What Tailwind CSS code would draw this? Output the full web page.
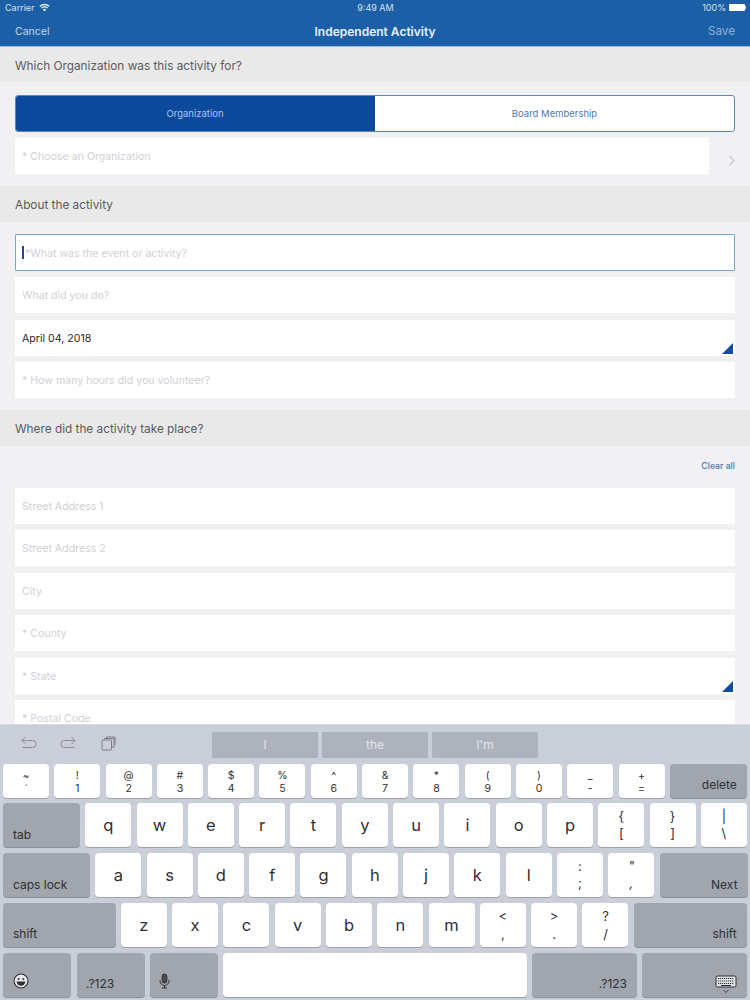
<!DOCTYPE html>
<html><head><meta charset="utf-8">
<script src="https://cdn.jsdelivr.net/npm/@tailwindcss/browser@4"></script>
</head>
<body class="m-0">
<div class="w-[750px] h-[1000px] overflow-hidden flex flex-col font-['Inter','Liberation_Sans',sans-serif] bg-[#f1f1f3]">
  <!-- header -->
  <div class="h-[47px] shrink-0 bg-[#1c5fa6] border-b border-[#a9c0db] text-white">
    <div class="h-[15px] flex items-center justify-between pl-[5px] pr-[4px] text-[9px] text-[#d5e2f0]">
      <div class="flex items-center gap-[4px] w-[150px]"><span>Carrier</span>
        <svg width="11" height="9" viewBox="0 0 22 16" fill="#e6eef7"><path d="M11 16 L7.5 12 Q11 9.4 14.5 12 Z"/><path d="M5.8 10 L4 8 Q11 2.6 18 8 L16.2 10 Q11 6.2 5.8 10 Z"/><path d="M2.6 6.6 L.6 4.6 Q11 -3.4 21.4 4.6 L19.4 6.6 Q11 .6 2.6 6.6 Z"/></svg>
      </div>
      <span>9:49 AM</span>
      <div class="flex items-center justify-end gap-[3px] w-[150px]"><span>100%</span>
        <div class="flex items-center"><div class="w-[16px] h-[7px] bg-white rounded-[1px]"></div><div class="w-[1px] h-[3px] bg-[#c5d6e8]"></div></div>
      </div>
    </div>
    <div class="h-[31px] flex items-center justify-between px-[15px] pt-[2px]">
      <span class="text-[10.5px] text-[#c4d6ea] w-[100px]">Cancel</span>
      <span class="text-[12px] font-semibold text-[#e8f0f8]">Independent Activity</span>
      <span class="text-[11.7px] text-[#8fb1d6] w-[100px] text-right">Save</span>
    </div>
  </div>

  <!-- form -->
  <div class="h-[677px] overflow-hidden shrink-0">
    <div class="h-[35px] bg-[#e9e9ea] flex items-center px-[15px] pt-[4px] text-[11.8px] text-[#5a5a5c]">Which Organization was this activity for?</div>

    <div class="mt-[13px] mx-[15px] h-[37px] w-[720px] flex rounded-[3px] overflow-hidden border border-[#5d86b8] bg-white text-[9.5px]">
      <div class="w-[360px] -ml-px -my-px pt-[2px] bg-[#0d4a9e] text-[#a9c8ea] flex items-center justify-center">Organization</div>
      <div class="flex-1 pt-[2px] text-[#4f77ad] flex items-center justify-center">Board Membership</div>
    </div>
    <div class="mt-[6px] ml-[15px] flex items-start">
      <div class="w-[694px] h-[36px] bg-white rounded-[1px] flex items-center px-[7px] pt-[2px] text-[10.6px] text-[#d0d0d4]">* Choose an Organization</div>
      <svg class="ml-[19px] mt-[17px]" width="8" height="11" viewBox="0 0 8 11" fill="none" stroke="#c6c6ca" stroke-width="1.1"><path d="M1.5 1 L6.2 5.5 L1.5 10"/></svg>
    </div>

    <div class="mt-[12px] h-[36px] bg-[#e9e9ea] flex items-center px-[15px] pt-[4px] text-[11.8px] text-[#5a5a5c]">About the activity</div>

    <div class="mt-[12px] mx-[15px] flex flex-col gap-[6.5px]">
      <div class="h-[36.5px] bg-white border border-[#6fa8cf] rounded-[1px] flex items-center pl-[6px] text-[10.6px] text-[#d0d0d4]">
        <span class="w-[2px] h-[13px] bg-[#1f4a86] mr-[1px] mt-[1px]"></span><span class="pt-[3px]">*What was the event or activity?</span>
      </div>
      <div class="h-[36px] bg-white flex items-center px-[7px] pt-[2px] text-[10.6px] text-[#d0d0d4]">What did you do?</div>
      <div class="relative h-[36px] bg-white flex items-center px-[7px] pt-[2px] text-[10.6px] text-[#2a2a2c]">April 04, 2018
        <svg class="absolute right-[2px] bottom-[2px]" width="11" height="11" viewBox="0 0 10 10"><path d="M10 0 V10 H0 Z" fill="#114c9e"/></svg>
      </div>
      <div class="h-[35.5px] bg-white flex items-center px-[7px] pt-[2px] text-[10.6px] text-[#d0d0d4]">* How many hours did you volunteer?</div>
    </div>

    <div class="mt-[12.5px] h-[36px] bg-[#e9e9ea] flex items-center px-[15px] pt-[3px] text-[11.8px] text-[#5a5a5c]">Where did the activity take place?</div>

    <div class="h-[42px] flex items-center justify-end pr-[15px] text-[8.7px] font-medium text-[#4f77ad]">Clear all</div>

    <div class="mx-[15px] flex flex-col gap-[6.4px]">
      <div class="h-[36px] bg-white flex items-center px-[7px] pt-[2px] text-[10.6px] text-[#d0d0d4]">Street Address 1</div>
      <div class="h-[36px] bg-white flex items-center px-[7px] pt-[2px] text-[10.6px] text-[#d0d0d4]">Street Address 2</div>
      <div class="h-[36px] bg-white flex items-center px-[7px] pt-[2px] text-[10.6px] text-[#d0d0d4]">City</div>
      <div class="h-[36px] bg-white flex items-center px-[7px] pt-[2px] text-[10.6px] text-[#d0d0d4]">* County</div>
      <div class="relative h-[36px] bg-white flex items-center px-[7px] pt-[2px] text-[10.6px] text-[#d0d0d4]">* State
        <svg class="absolute right-[2px] bottom-[2px]" width="11" height="11" viewBox="0 0 10 10"><path d="M10 0 V10 H0 Z" fill="#114c9e"/></svg>
      </div>
      <div class="h-[36px] bg-white flex items-center px-[7px] pt-[2px] text-[10.6px] text-[#d0d0d4]">* Postal Code</div>
    </div>
  </div>

  <!-- keyboard -->
  <div class="flex-1 bg-[#c9ced8] border-t border-[#d6d9df] pl-[3px] text-[#2f3033]">
    <!-- toolbar -->
    <div class="h-[39px] flex items-start pt-[6px] relative">
      <svg class="ml-[18px] mt-[5px]" width="16" height="16" viewBox="0 0 16 16" fill="none" stroke="#8a8d94" stroke-width="1"><path d="M1 4.5 H11.5 A3.5 3.5 0 0 1 11.5 11.5 H1.5"/><path d="M4.5 1 L1 4.5 L4.5 8"/></svg>
      <svg class="ml-[23px] mt-[5px]" width="16" height="16" viewBox="0 0 16 16" fill="none" stroke="#8a8d94" stroke-width="1"><path d="M15 4.5 H4.5 A3.5 3.5 0 0 0 4.5 11.5 H14.5"/><path d="M11.5 1 L15 4.5 L11.5 8"/></svg>
      <svg class="ml-[25px] mt-[5px]" width="15" height="15" viewBox="0 0 15 15" fill="none" stroke="#7b7e85" stroke-width="1"><rect x="1" y="4" width="9.5" height="10" rx="1"/><path d="M3.5 3.5 V2.5 H13 V11 H11"/><path d="M5.5 2 V1 H14 V9"/></svg>
      <div class="ml-[96px] mt-[1px] flex gap-[4px] text-[12px] text-[#e4e6ea]">
        <div class="w-[106px] h-[26px] bg-[#adb2bc] rounded-[2px] flex items-center justify-center">I</div>
        <div class="w-[106px] h-[26px] bg-[#adb2bc] rounded-[2px] flex items-center justify-center">the</div>
        <div class="w-[106px] h-[26px] bg-[#adb2bc] rounded-[2px] flex items-center justify-center">I'm</div>
      </div>
    </div>

    <!-- number row -->
    <div class="flex gap-[5.3px] h-[34px]">
      <div class="w-[46px] bg-white rounded-[4px] shadow-[0_1px_0_#9da1a9] flex flex-col items-center justify-center pt-[1px] text-[10px] leading-[13px]"><span>~</span><span>`</span></div>
      <div class="w-[46px] bg-white rounded-[4px] shadow-[0_1px_0_#9da1a9] flex flex-col items-center justify-center pt-[1px] text-[10.5px] leading-[13px]"><span>!</span><span>1</span></div>
      <div class="w-[46px] bg-white rounded-[4px] shadow-[0_1px_0_#9da1a9] flex flex-col items-center justify-center pt-[1px] text-[10.5px] leading-[13px]"><span>@</span><span>2</span></div>
      <div class="w-[46px] bg-white rounded-[4px] shadow-[0_1px_0_#9da1a9] flex flex-col items-center justify-center pt-[1px] text-[10.5px] leading-[13px]"><span>#</span><span>3</span></div>
      <div class="w-[46px] bg-white rounded-[4px] shadow-[0_1px_0_#9da1a9] flex flex-col items-center justify-center pt-[1px] text-[10.5px] leading-[13px]"><span>$</span><span>4</span></div>
      <div class="w-[46px] bg-white rounded-[4px] shadow-[0_1px_0_#9da1a9] flex flex-col items-center justify-center pt-[1px] text-[10.5px] leading-[13px]"><span>%</span><span>5</span></div>
      <div class="w-[46px] bg-white rounded-[4px] shadow-[0_1px_0_#9da1a9] flex flex-col items-center justify-center pt-[1px] text-[10.5px] leading-[13px]"><span>^</span><span>6</span></div>
      <div class="w-[46px] bg-white rounded-[4px] shadow-[0_1px_0_#9da1a9] flex flex-col items-center justify-center pt-[1px] text-[10.5px] leading-[13px]"><span>&amp;</span><span>7</span></div>
      <div class="w-[46px] bg-white rounded-[4px] shadow-[0_1px_0_#9da1a9] flex flex-col items-center justify-center pt-[1px] text-[10.5px] leading-[13px]"><span>*</span><span>8</span></div>
      <div class="w-[46px] bg-white rounded-[4px] shadow-[0_1px_0_#9da1a9] flex flex-col items-center justify-center pt-[1px] text-[10.5px] leading-[13px]"><span>(</span><span>9</span></div>
      <div class="w-[46px] bg-white rounded-[4px] shadow-[0_1px_0_#9da1a9] flex flex-col items-center justify-center pt-[1px] text-[10.5px] leading-[13px]"><span>)</span><span>0</span></div>
      <div class="w-[46px] bg-white rounded-[4px] shadow-[0_1px_0_#9da1a9] flex flex-col items-center justify-center pt-[1px] text-[10.5px] leading-[13px]"><span>_</span><span>-</span></div>
      <div class="w-[46px] bg-white rounded-[4px] shadow-[0_1px_0_#9da1a9] flex flex-col items-center justify-center pt-[1px] text-[10.5px] leading-[13px]"><span>+</span><span>=</span></div>
      <div class="w-[77px] bg-[#a0a5ae] rounded-[4px] shadow-[0_1px_0_#8b8f97] flex items-end justify-end pr-[10px] pb-[4px] text-[12px]">delete</div>
    </div>

    <!-- qwerty -->
    <div class="flex h-[44px] mt-[5px] gap-[5.3px]">
      <div class="w-[77px] bg-[#a0a5ae] rounded-[4px] shadow-[0_1px_0_#8b8f97] flex items-end pl-[10px] pb-[3px] text-[12px]">tab</div>
      <div class="w-[46px] bg-white rounded-[4px] shadow-[0_1px_0_#9da1a9] flex items-center justify-center text-[16.5px]">q</div>
      <div class="w-[46px] bg-white rounded-[4px] shadow-[0_1px_0_#9da1a9] flex items-center justify-center text-[16.5px]">w</div>
      <div class="w-[46px] bg-white rounded-[4px] shadow-[0_1px_0_#9da1a9] flex items-center justify-center text-[16.5px]">e</div>
      <div class="w-[46px] bg-white rounded-[4px] shadow-[0_1px_0_#9da1a9] flex items-center justify-center text-[16.5px]">r</div>
      <div class="w-[46px] bg-white rounded-[4px] shadow-[0_1px_0_#9da1a9] flex items-center justify-center text-[16.5px]">t</div>
      <div class="w-[46px] bg-white rounded-[4px] shadow-[0_1px_0_#9da1a9] flex items-center justify-center text-[16.5px]">y</div>
      <div class="w-[46px] bg-white rounded-[4px] shadow-[0_1px_0_#9da1a9] flex items-center justify-center text-[16.5px]">u</div>
      <div class="w-[46px] bg-white rounded-[4px] shadow-[0_1px_0_#9da1a9] flex items-center justify-center text-[16.5px]">i</div>
      <div class="w-[46px] bg-white rounded-[4px] shadow-[0_1px_0_#9da1a9] flex items-center justify-center text-[16.5px]">o</div>
      <div class="w-[46px] bg-white rounded-[4px] shadow-[0_1px_0_#9da1a9] flex items-center justify-center text-[16.5px]">p</div>
      <div class="w-[46px] bg-white rounded-[4px] shadow-[0_1px_0_#9da1a9] flex flex-col items-center justify-center text-[13px] leading-[17px]"><span>{</span><span>[</span></div>
      <div class="w-[46px] bg-white rounded-[4px] shadow-[0_1px_0_#9da1a9] flex flex-col items-center justify-center text-[13px] leading-[17px]"><span>}</span><span>]</span></div>
      <div class="w-[46px] bg-white rounded-[4px] shadow-[0_1px_0_#9da1a9] flex flex-col items-center justify-center text-[13px] leading-[17px]"><span>|</span><span>\</span></div>
    </div>

    <!-- asdf -->
    <div class="flex h-[44px] mt-[6px] gap-[5.3px]">
      <div class="w-[87px] bg-[#a0a5ae] rounded-[4px] shadow-[0_1px_0_#8b8f97] flex items-end pl-[10px] pb-[3px] text-[12px]">caps lock</div>
      <div class="w-[46px] bg-white rounded-[4px] shadow-[0_1px_0_#9da1a9] flex items-center justify-center text-[16.5px]">a</div>
      <div class="w-[46px] bg-white rounded-[4px] shadow-[0_1px_0_#9da1a9] flex items-center justify-center text-[16.5px]">s</div>
      <div class="w-[46px] bg-white rounded-[4px] shadow-[0_1px_0_#9da1a9] flex items-center justify-center text-[16.5px]">d</div>
      <div class="w-[46px] bg-white rounded-[4px] shadow-[0_1px_0_#9da1a9] flex items-center justify-center text-[16.5px]">f</div>
      <div class="w-[46px] bg-white rounded-[4px] shadow-[0_1px_0_#9da1a9] flex items-center justify-center text-[16.5px]">g</div>
      <div class="w-[46px] bg-white rounded-[4px] shadow-[0_1px_0_#9da1a9] flex items-center justify-center text-[16.5px]">h</div>
      <div class="w-[46px] bg-white rounded-[4px] shadow-[0_1px_0_#9da1a9] flex items-center justify-center text-[16.5px]">j</div>
      <div class="w-[46px] bg-white rounded-[4px] shadow-[0_1px_0_#9da1a9] flex items-center justify-center text-[16.5px]">k</div>
      <div class="w-[46px] bg-white rounded-[4px] shadow-[0_1px_0_#9da1a9] flex items-center justify-center text-[16.5px]">l</div>
      <div class="w-[46px] bg-white rounded-[4px] shadow-[0_1px_0_#9da1a9] flex flex-col items-center justify-center text-[13px] leading-[17px]"><span>:</span><span>;</span></div>
      <div class="w-[46px] bg-white rounded-[4px] shadow-[0_1px_0_#9da1a9] flex flex-col items-center justify-center text-[13px] leading-[17px] italic"><span>"</span><span>,</span></div>
      <div class="w-[88px] bg-[#a0a5ae] rounded-[4px] shadow-[0_1px_0_#8b8f97] flex items-end justify-end pr-[10px] pb-[3px] text-[12px]">Next</div>
    </div>

    <!-- zxcv -->
    <div class="flex h-[44px] mt-[6px] gap-[5.3px]">
      <div class="w-[112.5px] bg-[#a0a5ae] rounded-[4px] shadow-[0_1px_0_#8b8f97] flex items-end pl-[10px] pb-[4px] text-[12px]">shift</div>
      <div class="w-[46px] bg-white rounded-[4px] shadow-[0_1px_0_#9da1a9] flex items-center justify-center text-[16.5px]">z</div>
      <div class="w-[46px] bg-white rounded-[4px] shadow-[0_1px_0_#9da1a9] flex items-center justify-center text-[16.5px]">x</div>
      <div class="w-[46px] bg-white rounded-[4px] shadow-[0_1px_0_#9da1a9] flex items-center justify-center text-[16.5px]">c</div>
      <div class="w-[46px] bg-white rounded-[4px] shadow-[0_1px_0_#9da1a9] flex items-center justify-center text-[16.5px]">v</div>
      <div class="w-[46px] bg-white rounded-[4px] shadow-[0_1px_0_#9da1a9] flex items-center justify-center text-[16.5px]">b</div>
      <div class="w-[46px] bg-white rounded-[4px] shadow-[0_1px_0_#9da1a9] flex items-center justify-center text-[16.5px]">n</div>
      <div class="w-[46px] bg-white rounded-[4px] shadow-[0_1px_0_#9da1a9] flex items-center justify-center text-[16.5px]">m</div>
      <div class="w-[46px] bg-white rounded-[4px] shadow-[0_1px_0_#9da1a9] flex flex-col items-center justify-center text-[13px] leading-[18px]"><span>&lt;</span><span>,</span></div>
      <div class="w-[46px] bg-white rounded-[4px] shadow-[0_1px_0_#9da1a9] flex flex-col items-center justify-center text-[13px] leading-[18px]"><span>&gt;</span><span>.</span></div>
      <div class="w-[46px] bg-white rounded-[4px] shadow-[0_1px_0_#9da1a9] flex flex-col items-center justify-center text-[13px] leading-[18px]"><span>?</span><span>/</span></div>
      <div class="w-[113px] bg-[#a0a5ae] rounded-[4px] shadow-[0_1px_0_#8b8f97] flex items-end justify-end pr-[10px] pb-[4px] text-[12px]">shift</div>
    </div>

    <!-- bottom -->
    <div class="flex h-[44px] mt-[6px]">
      <div class="w-[68px] bg-[#a0a5ae] rounded-[4px] shadow-[0_1px_0_#8b8f97] flex items-end pl-[10px] pb-[8px]">
        <svg width="16" height="16" viewBox="0 0 16 16"><circle cx="8" cy="8" r="7" fill="#e8e9ea" stroke="#2f3033" stroke-width="1.1"/><circle cx="5.6" cy="6" r="1" fill="#2f3033"/><circle cx="10.4" cy="6" r="1" fill="#2f3033"/><path d="M3.6 8.6 H12.4 Q11.8 12.8 8 12.8 Q4.2 12.8 3.6 8.6 Z" fill="#2f3033"/></svg>
      </div>
      <div class="w-[68px] ml-[6px] bg-[#a0a5ae] rounded-[4px] shadow-[0_1px_0_#8b8f97] flex items-end pl-[9px] pb-[4px] text-[12px]">.?123</div>
      <div class="w-[68px] ml-[5px] bg-[#a0a5ae] rounded-[4px] shadow-[0_1px_0_#8b8f97] flex items-end pl-[9px] pb-[8px]">
        <svg width="11" height="16" viewBox="0 0 11 16" fill="none" stroke="#2f3033" stroke-width="1"><rect x="3.2" y="1" width="4.6" height="9" rx="2.3" fill="#4a4c50"/><path d="M1 7 V8 A4.5 4.5 0 0 0 10 8 V7"/><path d="M5.5 12.5 V15 M3 15 H8"/></svg>
      </div>
      <div class="w-[304px] ml-[5px] bg-white rounded-[4px] shadow-[0_1px_0_#9da1a9]"></div>
      <div class="w-[105px] ml-[5px] bg-[#a0a5ae] rounded-[4px] shadow-[0_1px_0_#8b8f97] flex items-end justify-end pr-[10px] pb-[4px] text-[12px]">.?123</div>
      <div class="w-[105px] ml-[5px] bg-[#a0a5ae] rounded-[4px] shadow-[0_1px_0_#8b8f97] flex items-end justify-end pr-[10px] pb-[3px]">
        <svg width="22" height="19" viewBox="0 0 22 19" fill="none" stroke="#2f3033"><rect x="1" y="1" width="20" height="11" rx="1.5" fill="#dfe1e4" stroke-width="1"/><path d="M3 3.5 H19 M3 6 H19 M3 8.5 H19" stroke-width="1.1" stroke-dasharray="1.2 .8"/><path d="M6 10.5 H16" stroke-width="1"/><path d="M8.5 15 L11 17.5 L13.5 15" stroke-width=".9"/></svg>
      </div>
    </div>
  </div>
</div>
</body></html>
